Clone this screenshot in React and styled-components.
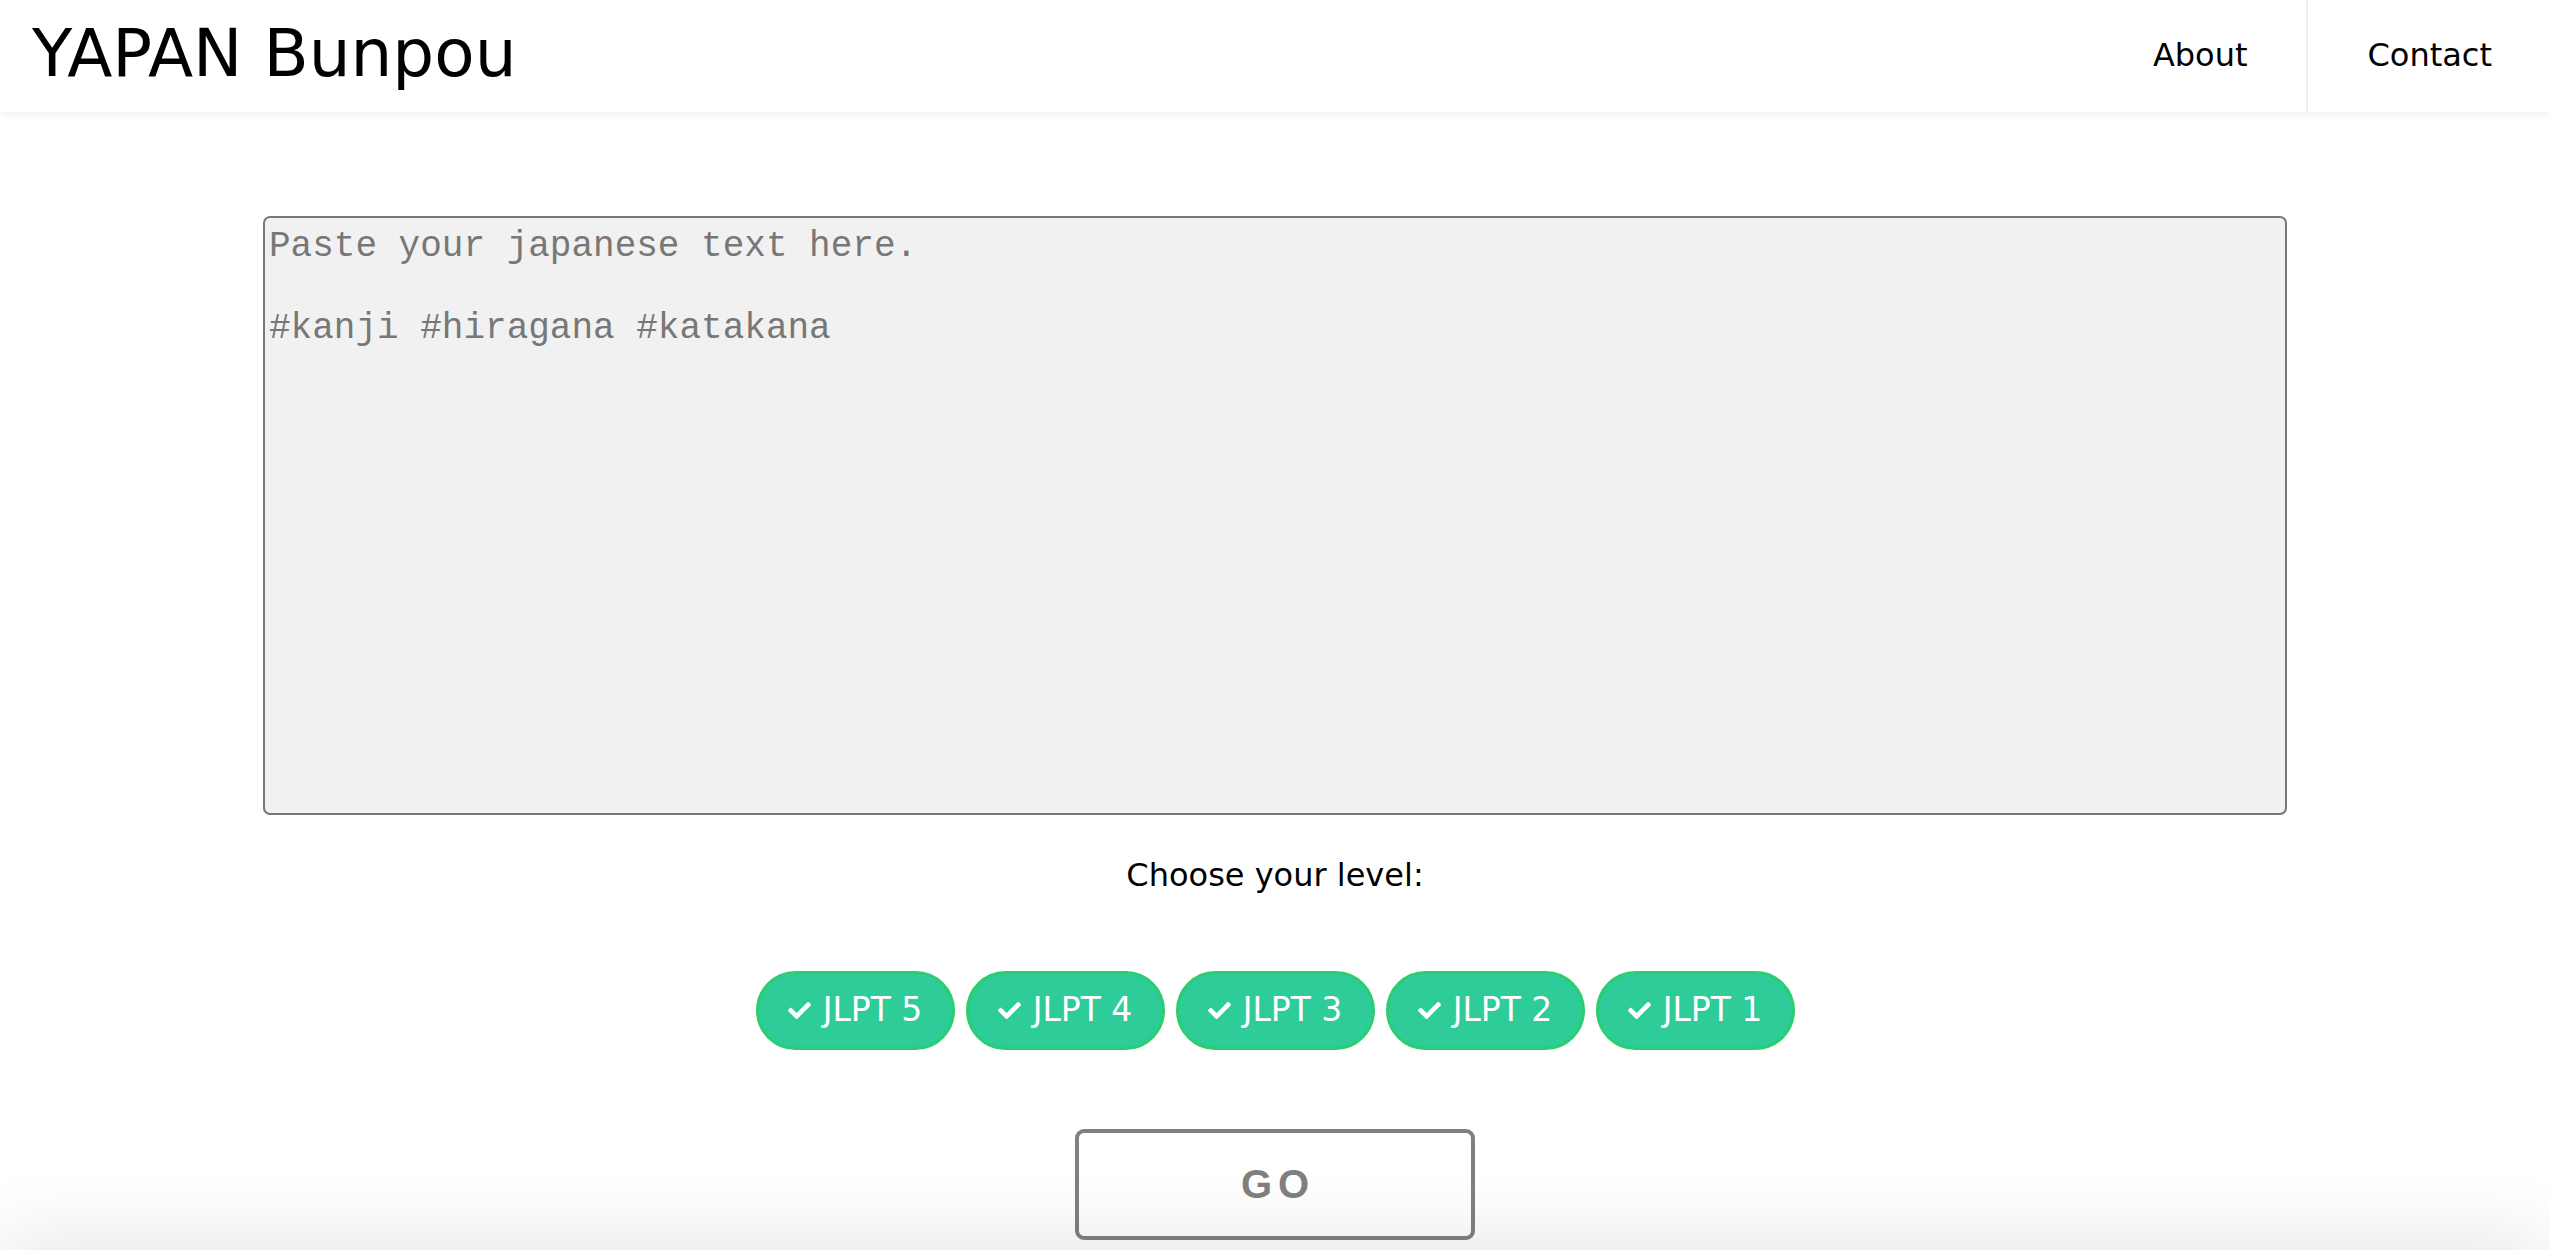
import React from "react";
import styled, { createGlobalStyle } from "styled-components";
import { FaCheck } from "react-icons/fa";

const GlobalStyle = createGlobalStyle`
  html, body {
    margin: 0;
    padding: 0;
    background: #ffffff;
    overflow: hidden;
  }
  body {
    font-family: "DejaVu Sans", Verdana, sans-serif;
    color: #000;
  }
  * { box-sizing: border-box; }
`;

const Page = styled.div`
  min-height: 100vh;
  display: flex;
  flex-direction: column;
`;

const Header = styled.header`
  height: 112px;
  display: flex;
  justify-content: space-between;
  align-items: stretch;
  background: #fff;
  box-shadow: 0 1px 8px rgba(0, 0, 0, 0.09);
  position: relative;
  z-index: 2;
`;

const Title = styled.h1`
  margin: 0;
  padding-left: 32px;
  align-self: center;
  font-family: "DejaVu Sans", Verdana, sans-serif;
  font-weight: normal;
  font-size: 66px;
  line-height: 1;
  padding-bottom: 4px;
`;

const Nav = styled.nav`
  display: flex;
  align-items: stretch;
`;

const NavItem = styled.a`
  display: flex;
  align-items: center;
  padding: 0 58px 2px 60px;
  font-size: 32px;
  color: #000;
  text-decoration: none;
  border-left: ${(p) => (p.$divided ? "2px solid #eeeeee" : "none")};
`;

const Main = styled.main`
  display: flex;
  flex-direction: column;
  align-items: center;
  padding-top: 104px;
`;

const TextInput = styled.textarea`
  display: block;
  width: 2024px;
  height: 599px;
  margin: 0;
  padding: 8px 4px;
  background: #f1f1f1;
  border: 2px solid #777777;
  border-radius: 7px;
  font-family: "Liberation Mono", "Courier New", monospace;
  font-size: 36px;
  line-height: 41px;
  color: #333;
  resize: none;
  outline: none;

  &::placeholder {
    color: #777777;
    opacity: 1;
  }
`;

const Label = styled.p`
  margin: 42px 0 0;
  font-size: 32px;
  line-height: 37px;
`;

const Levels = styled.div`
  display: flex;
  gap: 11px;
  margin-top: 77px;
`;

const LevelButton = styled.button`
  display: flex;
  align-items: center;
  justify-content: center;
  gap: 12px;
  width: 199px;
  height: 79px;
  padding: 0 0 2px;
  border: 3px solid #2ecc71;
  border-radius: 40px;
  background: #2ecc99;
  color: #ffffff;
  font-family: "DejaVu Sans", Verdana, sans-serif;
  font-size: 33px;
  cursor: pointer;

  svg {
    width: 23px;
    height: 23px;
    margin-top: 2px;
  }
`;

const GoButton = styled.button`
  width: 400px;
  height: 111px;
  margin-top: 79px;
  border: 4px solid #808080;
  border-radius: 9px;
  background: #ffffff;
  color: #808080;
  font-family: "Liberation Sans", Arial, sans-serif;
  font-weight: bold;
  font-size: 40px;
  letter-spacing: 6px;
  padding: 0 0 0 6px;
  cursor: pointer;
`;

const FooterShade = styled.div`
  position: fixed;
  left: 0;
  right: 0;
  top: 100vh;
  height: 40px;
  background: #fff;
  box-shadow: 0 0 80px rgba(0, 0, 0, 0.17);
  z-index: 3;
`;

const levels = [5, 4, 3, 2, 1];

export default function App() {
  return (
    <Page>
      <GlobalStyle />
      <Header>
        <Title>YAPAN Bunpou</Title>
        <Nav>
          <NavItem href="#">About</NavItem>
          <NavItem href="#" $divided>
            Contact
          </NavItem>
        </Nav>
      </Header>
      <Main>
        <TextInput
          placeholder={
            "Paste your japanese text here.\n\n#kanji #hiragana #katakana"
          }
        />
        <Label>Choose your level:</Label>
        <Levels>
          {levels.map((l) => (
            <LevelButton key={l}>
              <FaCheck />
              JLPT {l}
            </LevelButton>
          ))}
        </Levels>
        <GoButton>GO</GoButton>
      </Main>
      <FooterShade />
    </Page>
  );
}
